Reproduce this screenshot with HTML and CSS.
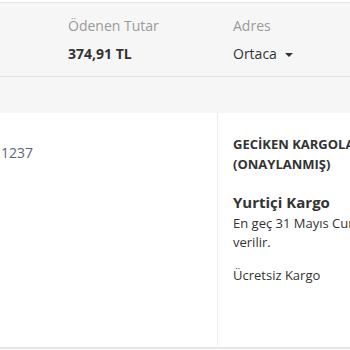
FILE: index.html
```html
<!DOCTYPE html>
<html lang="tr">
<head>
<meta charset="utf-8">
<link rel="stylesheet" href="styles.css">
</head>
<body>
<div class="page">
  <div class="summary">
    <div class="col">
      <div class="label">Ödenen Tutar</div>
      <div class="value strong">374,91 TL</div>
    </div>
    <div class="col">
      <div class="label">Adres</div>
      <div class="value">Ortaca <span class="caret"></span></div>
    </div>
  </div>
  <div class="spacer"></div>
  <div class="card">
    <div class="cell-left">
      <span class="order-no">1237</span>
    </div>
    <div class="cell-right">
      <div class="status">GECİKEN KARGOLAR (ONAYLANMIŞ)</div>
      <div class="carrier">Yurtiçi Kargo</div>
      <div class="note">En geç 31 Mayıs Cuma günü kargoya verilir.</div>
      <div class="shipping">Ücretsiz Kargo</div>
    </div>
  </div>
</div>
</body>
</html>
```

FILE: styles.css
```css
html, body {
  margin: 0;
  padding: 0;
  overflow: hidden;
  background: #ffffff;
}
.page {
  padding-top: 2px;
  width: 600px;
  font-family: "Open Sans", "DejaVu Sans", sans-serif;
  color: #333333;
}
.summary {
  display: flex;
  border-top: 1px solid #e4e4e4;
  border-bottom: 1px solid #e2e2e2;
  background: #f6f6f6;
  padding: 13px 0 12px 68px;
}
.col {
  width: 165px;
  display: flex;
  flex-direction: column;
  gap: 8px;
}
.label {
  font-size: 14px;
  line-height: 20px;
  color: #9a9a9a;
}
.value {
  font-size: 14px;
  line-height: 20px;
  color: #333333;
  display: flex;
  align-items: center;
  gap: 8px;
}
.value.strong {
  font-weight: 700;
}
.caret {
  width: 0;
  height: 0;
  border-left: 4px solid transparent;
  border-right: 4px solid transparent;
  border-top: 4px solid #333333;
  margin-top: 1px;
}
.spacer {
  height: 36px;
  background: #f6f6f6;
}
.card {
  display: flex;
  background: #ffffff;
  border-bottom: 2px solid #e6e6e6;
  height: 234px;
}
.cell-left {
  width: 218px;
  border-right: 1px solid #ececec;
  padding: 28px 0 0 1px;
  box-sizing: border-box;
  margin-bottom: 2px;
}
.order-no {
  font-size: 14px;
  line-height: 20px;
  color: #5a6484;
}
.cell-right {
  width: 225px;
  padding: 21px 0 0 15px;
  font-size: 13px;
  line-height: 20px;
  color: #333333;
}
.status {
  font-weight: 700;
}
.carrier {
  margin-top: 18px;
  font-size: 15px;
  font-weight: 700;
}
.note {
  line-height: 19px;
  margin-top: 2px;
}
.shipping {
  margin-top: 13px;
}
```
